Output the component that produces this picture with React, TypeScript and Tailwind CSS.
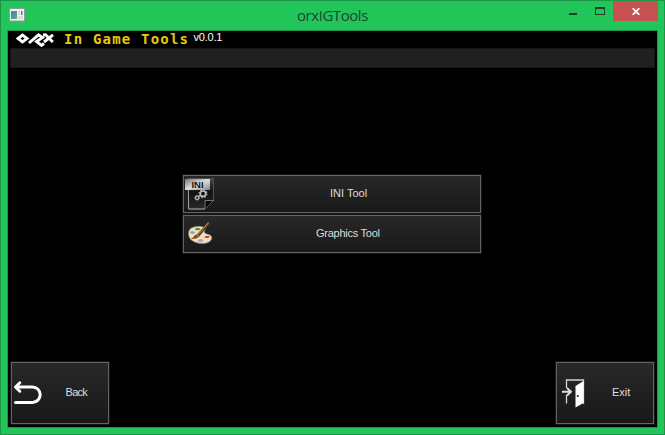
import type { ReactNode } from "react";

const panel =
  "border border-[#646464] bg-linear-to-b from-[#292929] via-[#202020] to-[#191919] flex items-center shadow-[0_0_0_1px_#161616]";
const label =
  "font-['Liberation_Sans',Arial,sans-serif] text-[11px] leading-[14px] text-[#dedede] whitespace-nowrap";

function WindowIcon() {
  return (
    <svg width="16" height="14" viewBox="0 0 16 14" className="block">
      <defs>
        <linearGradient id="app" x1="0" y1="0" x2="1" y2="1">
          <stop offset="0" stopColor="#4675b8" />
          <stop offset="1" stopColor="#62b673" />
        </linearGradient>
      </defs>
      <rect x=".5" y=".5" width="15" height="12.5" fill="#f1f1f1" stroke="#8f9f98" />
      <rect x="2" y="3" width="6" height="8" fill="url(#app)" />
      <rect x="9" y="3" width="2" height="4" fill="#d8dce0" />
      <rect x="12" y="3" width="1.5" height="4" fill="#3e83b7" />
      <rect x="9" y="8" width="5" height="3" fill="#dadada" />
    </svg>
  );
}

function OrxLogo() {
  return (
    <svg width="39" height="17" viewBox="0 0 39 17" fill="none" stroke="#fff" strokeWidth="2.9" className="block">
      <path d="M2 7.5 6.5 4 11 7.5 6.5 11Z" />
      <path d="M13 12 22.5 3.8 26.5 6.5 20.5 10.5 25.5 14.5 28 12.5" />
      <path d="M27 4 29.5 3.8 36.8 11M37 3.8 28 11" />
    </svg>
  );
}

function IniIcon() {
  return (
    <svg width="32" height="34" viewBox="0 0 32 34" className="block">
      <defs>
        <linearGradient id="page" x1="0" y1="0" x2="0" y2="1">
          <stop stopColor="#464646" />
          <stop offset=".45" stopColor="#111" />
          <stop offset="1" stopColor="#292929" />
        </linearGradient>
        <linearGradient id="tag" x1="0" y1="0" x2="1" y2="1">
          <stop stopColor="#777" />
          <stop offset=".5" stopColor="#ddd" />
          <stop offset="1" stopColor="#888" />
        </linearGradient>
      </defs>
      <path d="M4.5 1.5H29.5V23L21 32H4.5Z" fill="url(#page)" stroke="#505050" />
      <path d="M4.5 12V32H21L29.5 23.5" fill="none" stroke="#a0a0a0" />
      <path d="M21 32V23.5H29.5" fill="#080808" stroke="#777" />
      <rect x="1" y="2" width="25" height="11" fill="url(#tag)" />
      <text x="13.5" y="11" textAnchor="middle" fontFamily="Liberation Sans" fontSize="9.5" fontWeight="700" fill="#151515">INI</text>
      <g fill="none" stroke="#bdbdbd">
        <circle cx="19" cy="16.7" r="2.7" strokeWidth="1.6" />
        <circle cx="19" cy="16.7" r="3.9" strokeWidth="1.2" strokeDasharray="1.53 1.53" />
        <circle cx="13.2" cy="20.8" r="1.7" strokeWidth="1.2" />
        <circle cx="13.2" cy="20.8" r="2.5" strokeWidth=".8" strokeDasharray=".98 .98" />
      </g>
    </svg>
  );
}

function PaletteIcon() {
  return (
    <svg width="28" height="26" viewBox="0 0 28 26" className="block">
      <path d="M2.5 12C2.5 7 8 5 14 5.3C19 5.8 20 7.5 18.5 10.5C18 14 25.5 12 25.8 16.5C26 21 20 23.2 14 22.5C7 21.5 2 18 2.5 12Z" fill="#eee1c0" stroke="#796b50" strokeWidth=".7" />
      <path d="M9 7.7Q12 5.8 14.5 8Q13.5 9.8 9.5 9Z" fill="#439640" />
      <ellipse cx="6.5" cy="11.5" rx="2.3" ry="1.2" fill="#8499cf" />
      <ellipse cx="14.5" cy="19.5" rx="2.8" ry="1.5" fill="#b1a2c6" />
      <path d="M18.5 16Q20 14.5 24 15.3Q22.5 17.8 18.5 16.5Z" fill="#cf2322" />
      <path d="M5 18Q7 17 8.5 14.5L12 12.5 14 15Q11 18.5 5 18Z" fill="#8b4c25" />
      <path d="M12.5 14 23.2 1.5" stroke="#58341f" strokeWidth="3" />
      <path d="M12.5 13 22.7 1.3" stroke="#ad784c" strokeWidth="1.2" />
      <path d="M10.5 13.2 13.5 15.5" stroke="#c1a080" strokeWidth="1" />
    </svg>
  );
}

function BackIcon() {
  return (
    <svg width="30" height="26" viewBox="0 0 30 26" fill="none" stroke="#fff" className="block">
      <path d="M3 7H19.5A7.7 7.7 0 0 1 19.5 22.4H2.5" strokeWidth="3" strokeLinecap="round" />
      <path d="M6.8 2.8 2.5 7 6.8 11.2" strokeWidth="3" strokeLinecap="round" strokeLinejoin="round" />
    </svg>
  );
}

function ExitIcon() {
  return (
    <svg width="24" height="30" viewBox="0 0 24 30" className="block">
      <path d="M5.5 10V2H22.5V26M5.5 17V25.5" fill="none" stroke="#d2d2d2" strokeWidth="1.3" />
      <path d="M14.5 8 22.5 3V25L14.5 29.5Z" fill="#fff" />
      <path d="M1 13.7H10M6 10 10 13.7 6 17.5" fill="none" stroke="#dedede" strokeWidth="1.9" />
      <circle cx="16.8" cy="18" r="1.1" fill="#222" />
    </svg>
  );
}

function ToolButton({ icon, children, className }: { icon: ReactNode; children: string; className: string }) {
  return (
    <button className={`${panel} h-[38px] w-[298px]`}>
      <span className="w-[34px] shrink-0">{icon}</span>
      <span className={`${label} pb-[2px] ${className}`}>{children}</span>
    </button>
  );
}

export default function App() {
  return (
    <main className="flex h-[435px] w-[665px] flex-col overflow-hidden border border-[#1d9547] bg-[#22c55a]">
      <header className="flex h-[29px] shrink-0 items-start">
        <div className="ml-[8px] mt-[7px] w-[288px]"><WindowIcon /></div>
        <h1 className="mt-[4px] w-[257px] font-['Open_Sans',sans-serif] text-[15px] leading-5 tracking-[-0.45px] text-[#1d4a2b]">orxIGTools</h1>
        <div className="flex">
          <button aria-label="Minimize" className="flex h-5 w-[39px] items-start justify-center"><i className="mt-[12px] mr-px h-[2px] w-2 bg-[#213f29]" /></button>
          <button aria-label="Maximize" className="mt-[6px] ml-[2px] h-[8px] w-[10px] border border-t-2 border-[#213f29]" />
          <button aria-label="Close" className="ml-2 flex h-5 w-[45px] items-center justify-center bg-[#c75050]">
            <svg width="8" height="7" viewBox="0 0 8 7" stroke="#fff" strokeWidth="1.8"><path d="M.7.2 7.3 6.8M7.3.2.7 6.8" /></svg>
          </button>
        </div>
      </header>
      <section className="mx-[6px] flex h-[398px] w-[651px] flex-col border border-[#1d9547] bg-black">
        <div className="flex h-[17px] shrink-0 items-start">
          <div className="ml-2 w-12"><OrxLogo /></div>
          <strong className="w-[129.5px] whitespace-nowrap font-['DejaVu_Sans_Mono',monospace] text-[14px] leading-4 tracking-[1.2px] text-[#e5c90c]">In Game Tools</strong>
          <span className="-mt-px text-[11px] leading-[14px] tracking-[-0.2px] text-white font-['Liberation_Sans',Arial,sans-serif]">v0.0.1</span>
        </div>
        <div className="mx-[2px] h-5 shrink-0 border border-[#171717] bg-[#202020]" />
        <div className="flex h-[294px] shrink-0 flex-col gap-[2px] pt-[107px] pl-[175px]">
          <ToolButton icon={<IniIcon />} className="ml-[112px]">INI Tool</ToolButton>
          <ToolButton icon={<div className="ml-[2px]"><PaletteIcon /></div>} className="ml-[98px] tracking-[-0.25px]">Graphics Tool</ToolButton>
        </div>
        <footer className="mx-[3px] flex h-[62px] shrink-0 justify-between">
          <button className={`${panel} w-[98px]`}>
            <span className="ml-[1px] w-[52.5px]"><BackIcon /></span><span className={`${label} pb-[2px] tracking-[-0.7px]`}>Back</span>
          </button>
          <button className={`${panel} w-[98px]`}>
            <span className="ml-[4px] w-[51px]"><ExitIcon /></span><span className={`${label} pb-[2px]`}>Exit</span>
          </button>
        </footer>
      </section>
    </main>
  );
}
